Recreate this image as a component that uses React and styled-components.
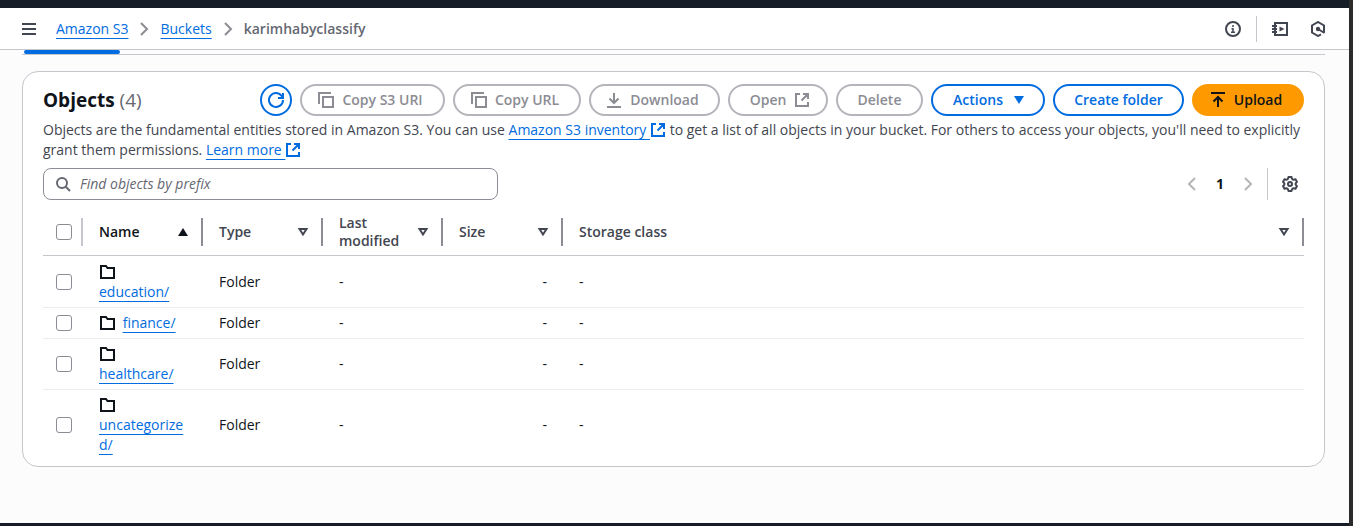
import React from "react";
import styled, { createGlobalStyle, css } from "styled-components";

const blue = "#006ce0";
const ink = "#0f141a";
const body = "#424650";

const Global = createGlobalStyle`
  *, *::before, *::after { box-sizing: border-box; }
  body {
    margin: 0;
    background: #fcfcfd;
    color: ${ink};
    font: 14px/20px "Open Sans", "Noto Sans", sans-serif;
  }
  button, input { font: inherit; color: inherit; }
`;

const Page = styled.div`
  min-height: 100vh;
  display: flex;
  flex-direction: column;
  border-right: 4px solid #2b2b2b;
`;

const Strip = styled.div`
  height: ${(p) => p.$height}px;
  background: #161d26;
`;

const TopBar = styled.header`
  display: flex;
  align-items: center;
  justify-content: space-between;
  height: 42px;
  padding: 0 23px 0 21px;
  background: #fff;
  border-bottom: 1px solid #c6c6cd;
`;

const Group = styled.div`
  display: flex;
  align-items: center;
  gap: ${(p) => p.$gap || 0}px;
`;

const Trail = styled.ol`
  display: flex;
  align-items: center;
  gap: 8px;
  margin: 0;
  padding: 0;
  list-style: none;

  li {
    display: flex;
    align-items: center;
    gap: 8px;
  }
`;

const Current = styled.span`
  color: #656871;
  font-weight: 600;
`;

const Link = styled.a`
  color: ${blue};
  text-decoration: underline 1px;
  text-underline-offset: 4px;
  text-decoration-skip-ink: none;
  overflow-wrap: anywhere;
`;

const IconButton = styled.button`
  display: inline-flex;
  padding: 0;
  border: 0;
  background: none;
  color: ${(p) => (p.$muted ? "#b4b4bb" : body)};
`;

const Rule = styled.span`
  width: 1px;
  height: ${(p) => p.$height}px;
  background: #c6c6cd;
`;

const Main = styled.main`
  flex: 1;
  padding: 0 24px 56px 22px;
`;

const TabLine = styled.div`
  height: 5px;
  margin-bottom: 16px;
  padding-left: 2px;
  border-bottom: 1px solid #c6c6cd;
`;

const ActiveTab = styled.div`
  width: 96px;
  height: 4px;
  border-radius: 2px;
  background: ${blue};
`;

const Card = styled.section`
  padding: 12px 20px 6px;
  border: 1px solid #c6c6cd;
  border-radius: 16px;
  background: #fff;
`;

const CardHead = styled.div`
  display: flex;
  align-items: center;
  justify-content: space-between;
  margin-bottom: 4px;
`;

const Title = styled.h2`
  margin: 0;
  font-size: 19px;
  font-weight: 700;
  line-height: 24px;

  span {
    color: #656871;
    font-weight: 400;
  }
`;

const iconPadding = { left: "0 4px 0 0", right: "0 0 0 4px" };

const Button = styled.button`
  display: inline-flex;
  align-items: center;
  justify-content: center;
  gap: 8px;
  width: ${(p) => p.$width}px;
  height: 32px;
  padding: ${(p) => iconPadding[p.$icon] || 0};
  border: 2px solid ${blue};
  border-radius: 16px;
  background: #fff;
  color: ${blue};
  font-weight: 600;
  white-space: nowrap;

  &:disabled {
    border-color: #b4b4bb;
    color: #8c8c94;
  }

  ${(p) =>
    p.$primary &&
    css`
      border-color: #ff9900;
      background: #ff9900;
      color: ${ink};
    `}
`;

const Description = styled.p`
  margin: 0 0 8px;
  color: ${body};

  svg { vertical-align: -3px; }
`;

const Tools = styled.div`
  display: flex;
  align-items: center;
  justify-content: space-between;
  margin-bottom: 8px;
`;

const Search = styled.label`
  display: flex;
  align-items: center;
  gap: 9px;
  width: 455px;
  height: 32px;
  padding: 0 11px;
  border: 1px solid #8c8c94;
  border-radius: 8px;
  color: #656871;

  input {
    flex: 1;
    min-width: 0;
    padding: 0;
    border: 0;
    outline: 0;
    background: none;
  }

  input::placeholder {
    color: #656871;
    font-style: italic;
    opacity: 1;
  }
`;

const PageButton = styled.button`
  width: 32px;
  padding: 0;
  border: 0;
  background: none;
  font-weight: 700;
`;

const Preferences = styled(Group)`
  padding: 0 6px 0 3px;
`;

const Table = styled.table`
  width: 100%;
  table-layout: fixed;
  border-collapse: separate;
  border-spacing: 0;
`;

const HeadCell = styled.th`
  height: 48px;
  padding: 0;
  border-bottom: 1px solid #c6c6cd;
  text-align: left;
  color: ${(p) => (p.$active ? ink : body)};
  font-weight: 600;
  line-height: 18px;
`;

const HeadInner = styled.div`
  display: flex;
  align-items: center;
  justify-content: space-between;
  height: 28px;
  padding: ${(p) => (p.$select ? "0 0 0 13px" : "0 10px 0 16px")};
  border-right: 2px solid ${(p) => (p.$select ? "#c6c6cd" : "#8c8c94")};
`;

const Cell = styled.td`
  padding: 5px 16px;
  text-align: ${(p) => p.$align || "left"};

  tr:first-child > & { padding-top: 6px; }
  tr:not(:last-child) > & { border-bottom: 1px solid #ebebf0; }

  svg {
    margin-right: 4px;
    vertical-align: -3px;
  }
`;

const SelectCell = styled(Cell)`
  padding-left: 13px;
  padding-right: 0;
`;

const Check = styled.input.attrs({ type: "checkbox" })`
  display: block;
  appearance: none;
  width: 16px;
  height: 16px;
  margin: 0;
  border: 1px solid #8c8c94;
  border-radius: 3px;
  background: #fff;
`;

const shapes = {
  menu: <path d="M1 3h14M1 8h14M1 13h14" />,
  chevron: <path d="m5 2 6 6-6 6" />,
  back: <path d="m11 2-6 6 6 6" />,
  info: (
    <>
      <circle cx="8" cy="8" r="7" />
      <path d="M8 12V7M8 6V4M6 11.250h4M6.500 7.750H8" strokeWidth="1.500" />
    </>
  ),
  notebook: (
    <>
      <path d="M3 2h12v12H3zM0 5h5M0 8h5M0 11h5" />
      <path d="m7.500 5.500 5 2.500-5 2.500z" fill="currentColor" stroke="none" />
    </>
  ),
  hexagon: (
    <>
      <path d="M11 13.300 8 15l-6-3.500v-7L8 1l6 3.500v7" />
      <circle cx="8" cy="8" r="2.200" fill="currentColor" stroke="none" />
      <path d="m8 8 6.500 4" />
    </>
  ),
  refresh: (
    <>
      <path d="M15 1v5h-5" />
      <path d="M15 8a7 7 0 1 1-1.300-4.100L15 6" />
    </>
  ),
  copy: <path d="M15 5H5v10h10zM13 1H1v11" />,
  download: <path d="M1 15h14M8 1v10M3.500 6.500 8 11l4.500-4.500" />,
  upload: <path d="M1 1h14M8 15V5M3.500 9.500 8 5l4.500 4.500" />,
  external: <path d="M6 2H2v12h12v-4M9 2h5v5M14 2 7.500 8.500" />,
  search: (
    <>
      <circle cx="7" cy="7" r="5" />
      <path d="m10.500 10.500 4.500 4.500" />
    </>
  ),
  gear: (
    <>
      <path d="M6.500 1h3l.6 2 1.400.8 2-.5 1.500 2.600L13.600 7.400v1.200l1.400 1.500-1.500 2.600-2-.5-1.400.8-.6 2h-3l-.6-2-1.400-.8-2 .5L1 10.100l1.400-1.500V7.400L1 5.900l1.500-2.600 2 .5L5.900 3z" strokeLinejoin="round" />
      <circle cx="8" cy="8" r="2" />
    </>
  ),
  folder: <path d="M2 2v12h13V4H8.500L7 2z" />,
  down: <path d="M3 4h10l-5 8z" fill="currentColor" stroke="none" />,
  up: <path d="M3 12h10L8 4z" fill="currentColor" stroke="none" />,
  sort: <path d="M4.500 5h7L8 10.500z" />,
};

const Svg = styled.svg`
  flex: none;
  fill: none;
  stroke: currentColor;
  stroke-width: 2;
  color: ${(p) => p.$color || "inherit"};
`;

const Icon = ({ name, color }) => (
  <Svg width="16" height="16" viewBox="0 0 16 16" $color={color} aria-hidden="true">
    {shapes[name]}
  </Svg>
);

const columns = [
  { label: "Name", width: 120, active: true },
  { label: "Type", width: 120 },
  { label: "Last modified", width: 120 },
  { label: "Size", width: 120 },
  { label: "Storage class" },
];

const folders = ["education/", "finance/", "healthcare/", "uncategorized/"];

export default function App() {
  return (
    <Page>
      <Global />
      <Strip $height={8} />
      <TopBar>
        <Group $gap={19}>
          <IconButton aria-label="Open navigation">
            <Icon name="menu" />
          </IconButton>
          <nav aria-label="Breadcrumbs">
            <Trail>
              <li>
                <Link href="#s3">Amazon S3</Link>
                <Icon name="chevron" color="#8c8c94" />
              </li>
              <li>
                <Link href="#buckets">Buckets</Link>
                <Icon name="chevron" color="#8c8c94" />
              </li>
              <li>
                <Current aria-current="page">karimhabyclassify</Current>
              </li>
            </Trail>
          </nav>
        </Group>
        <Group $gap={15}>
          <IconButton aria-label="Info"><Icon name="info" /></IconButton>
          <Rule $height={26} />
          <Group $gap={22}>
            <IconButton aria-label="Tutorials"><Icon name="notebook" /></IconButton>
            <IconButton aria-label="Assistant"><Icon name="hexagon" /></IconButton>
          </Group>
        </Group>
      </TopBar>
      <Main>
        <TabLine><ActiveTab /></TabLine>
        <Card>
          <CardHead>
            <Title>Objects <span>(4)</span></Title>
            <Group $gap={8}>
              <Button $width={32} aria-label="Refresh"><Icon name="refresh" /></Button>
              <Button $width={145} $icon="left" disabled><Icon name="copy" />Copy S3 URI</Button>
              <Button $width={128} $icon="left" disabled><Icon name="copy" />Copy URL</Button>
              <Button $width={131} $icon="left" disabled><Icon name="download" />Download</Button>
              <Button $width={100} $icon="right" disabled>Open<Icon name="external" /></Button>
              <Button $width={87} disabled>Delete</Button>
              <Button $width={114} $icon="right">Actions<Icon name="down" /></Button>
              <Button $width={131}>Create folder</Button>
              <Button $width={112} $icon="left" $primary><Icon name="upload" />Upload</Button>
            </Group>
          </CardHead>
          <Description>
            Objects are the fundamental entities stored in Amazon S3. You can use{" "}
            <Link href="#inventory">Amazon S3 inventory <Icon name="external" /></Link>{" "}
            to get a list of all objects in your bucket. For others to access your objects,
            you'll need to explicitly grant them permissions.{" "}
            <Link href="#learn">Learn more <Icon name="external" /></Link>
          </Description>
          <Tools>
            <Search>
              <Icon name="search" />
              <input type="text" placeholder="Find objects by prefix" aria-label="Find objects by prefix" />
            </Search>
            <Group $gap={11}>
              <Group $gap={4}>
                <IconButton $muted aria-label="Previous page"><Icon name="back" /></IconButton>
                <PageButton>1</PageButton>
                <IconButton $muted aria-label="Next page"><Icon name="chevron" /></IconButton>
              </Group>
              <Rule $height={32} />
              <Preferences>
                <IconButton aria-label="Preferences"><Icon name="gear" /></IconButton>
              </Preferences>
            </Group>
          </Tools>
          <Table>
            <colgroup>
              <col width="40" />
              {columns.map((c) => <col key={c.label} width={c.width} />)}
            </colgroup>
            <thead>
              <tr>
                <HeadCell>
                  <HeadInner $select><Check aria-label="Select all" /></HeadInner>
                </HeadCell>
                {columns.map((c) => (
                  <HeadCell key={c.label} $active={c.active} scope="col">
                    <HeadInner>
                      {c.label}
                      <Icon name={c.active ? "up" : "sort"} />
                    </HeadInner>
                  </HeadCell>
                ))}
              </tr>
            </thead>
            <tbody>
              {folders.map((name) => (
                <tr key={name}>
                  <SelectCell><Check aria-label={"Select " + name} /></SelectCell>
                  <Cell><Icon name="folder" /> <Link href="#folder">{name}</Link></Cell>
                  <Cell>Folder</Cell>
                  <Cell>-</Cell>
                  <Cell $align="right">-</Cell>
                  <Cell>-</Cell>
                </tr>
              ))}
            </tbody>
          </Table>
        </Card>
      </Main>
      <Strip $height={3} />
    </Page>
  );
}
